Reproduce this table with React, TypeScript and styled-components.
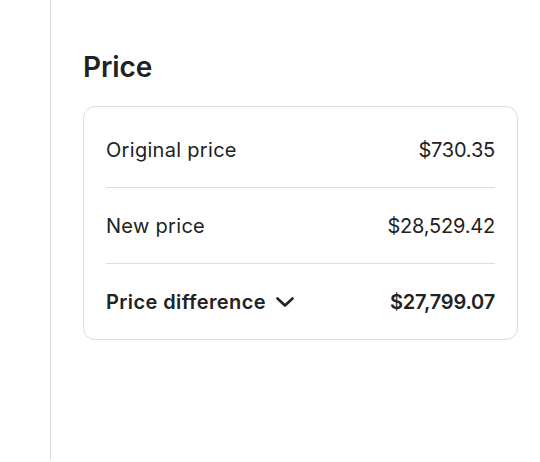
import React from "react";
import styled, { createGlobalStyle } from "styled-components";

const Global = createGlobalStyle`
  html, body { margin: 0; padding: 0; background: #fff; }
  body { font-family: Inter, "Noto Sans", sans-serif; color: #222; }
`;

const Page = styled.div`
  display: flex;
  height: 461px;
`;

const Rail = styled.div`
  width: 50px;
  flex: none;
  border-right: 1px solid #dddddd;
`;

const Main = styled.main`
  flex: 1;
  padding: 47px 22px 0 32px;
`;

const Title = styled.h2`
  margin: 0 0 19px 0;
  font-size: 28px;
  line-height: 40px;
  font-weight: 600;
  letter-spacing: -0.1px;
  color: #222;
`;

const Card = styled.section`
  border: 1px solid #dddddd;
  border-radius: 12px;
  padding: 5px 22px 0 22px;
`;

const Row = styled.div<{ $last?: boolean }>`
  display: flex;
  align-items: center;
  justify-content: space-between;
  height: ${(p) => (p.$last ? "75px" : "76px")};
  border-bottom: ${(p) => (p.$last ? "none" : "1px solid #dddddd")};
  box-sizing: border-box;
`;

const Label = styled.span<{ $bold?: boolean }>`
  display: inline-flex;
  align-items: center;
  gap: 9px;
  font-size: 20px;
  font-weight: ${(p) => (p.$bold ? 600 : 400)};
  letter-spacing: ${(p) => (p.$bold ? "0.4px" : "0.3px")};
`;

const Value = styled.span<{ $bold?: boolean }>`
  font-size: 20px;
  font-weight: ${(p) => (p.$bold ? 600 : 400)};
  letter-spacing: -0.2px;
`;

const Chevron = () => (
  <svg width="20" height="20" viewBox="0 0 20 20" fill="none" aria-hidden="true">
    <path d="M2.5 6.5 L10 13.5 L17.5 6.5" stroke="#222" strokeWidth="2.6" strokeLinecap="round" strokeLinejoin="round" />
  </svg>
);

export default function App() {
  return (
    <>
      <Global />
      <Page>
        <Rail />
        <Main>
          <Title>Price</Title>
          <Card>
            <Row>
              <Label>Original price</Label>
              <Value>$730.35</Value>
            </Row>
            <Row>
              <Label>New price</Label>
              <Value>$28,529.42</Value>
            </Row>
            <Row $last>
              <Label $bold>
                Price difference <Chevron />
              </Label>
              <Value $bold>$27,799.07</Value>
            </Row>
          </Card>
        </Main>
      </Page>
    </>
  );
}
